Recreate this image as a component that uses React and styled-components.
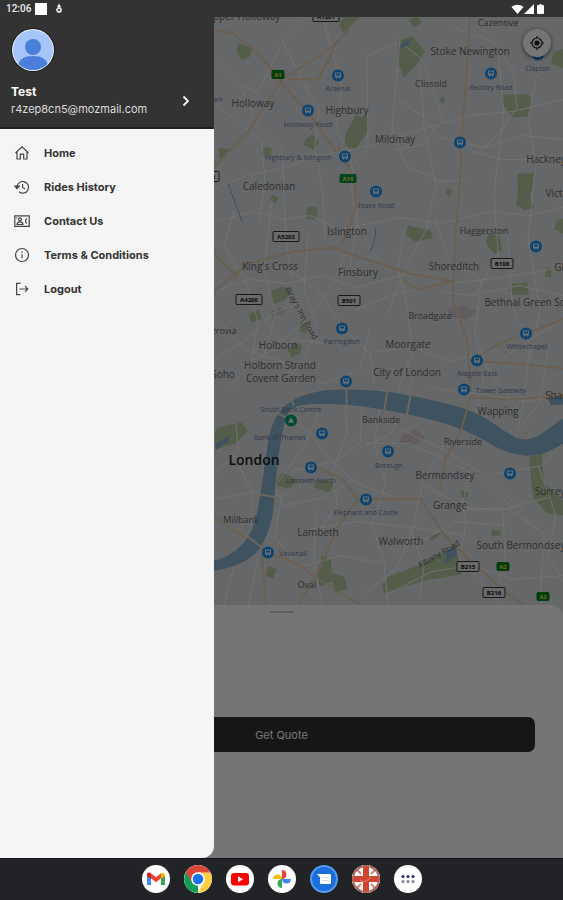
import React, { useState } from "react";
import styled, { createGlobalStyle } from "styled-components";

const GlobalStyle = createGlobalStyle`
  * {
    box-sizing: border-box;
  }

  body {
    margin: 0;
    background: #222327;
    font-family: Inter, "Liberation Sans", sans-serif;
  }
`;

const Screen = styled.div`
  display: flex;
  flex-direction: column;
  min-height: 100vh;
`;

const StatusBar = styled.header`
  display: flex;
  align-items: center;
  gap: 4px;
  height: 17px;
  padding: 0 18px 0 6px;
  background: #333;
  color: #eee;
  font-family: Roboto, sans-serif;
  font-size: 10px;
  font-weight: 500;
`;

const StatusSquare = styled.span`
  width: 12px;
  height: 12px;
  background: #fff;
`;

const StatusSpacer = styled.span`
  flex: 1;
`;

const Main = styled.main`
  position: relative;
  display: flex;
  flex: 1;
  flex-direction: column;
`;

const MapArea = styled.section`
  position: relative;
  flex: 1;
  min-height: 300px;
  background: #dfe1e3;
`;

const MapSvg = styled.svg`
  position: absolute;
  inset: 0;
  width: 100%;
  height: 100%;
  font-family: "Open Sans", sans-serif;
`;

const LocateButton = styled.button`
  position: absolute;
  top: 12px;
  right: 12px;
  display: flex;
  align-items: center;
  justify-content: center;
  width: 28px;
  height: 28px;
  padding: 0;
  border: 0;
  border-radius: 50%;
  background: #fff;
  box-shadow: 0 1px 4px rgba(0, 0, 0, 0.6);
  color: #222;
`;

const Sheet = styled.section`
  position: relative;
  display: flex;
  flex-direction: column;
  align-items: center;
  gap: 104px;
  margin-top: -12px;
  padding: 6px 28px 106px;
  border-radius: 12px 12px 0 0;
  background: #fff;
`;

const Handle = styled.div`
  width: 24px;
  height: 2px;
  border-radius: 1px;
  background: #ccc;
`;

const QuoteButton = styled.button`
  width: 100%;
  height: 35px;
  border: 0;
  border-radius: 7px;
  background: #303030;
  color: #fff;
  font: 400 11px Inter, sans-serif;
`;

const Scrim = styled.div`
  position: absolute;
  inset: 0;
  background: rgba(0, 0, 0, 0.54);
`;

const Drawer = styled.aside`
  position: absolute;
  top: 0;
  bottom: 0;
  left: 0;
  display: flex;
  flex-direction: column;
  width: 38%;
  min-width: 200px;
  overflow: hidden;
  border-radius: 0 0 12px 0;
  background: #f5f5f5;
`;

const Profile = styled.div`
  display: flex;
  flex-direction: column;
  gap: 12px;
  height: 112px;
  padding: 11px 20px 0 11px;
  border-bottom: 2px solid #222;
  background: #333;
`;

const Avatar = styled.svg`
  width: 44px;
  height: 44px;
`;

const ProfileLink = styled.a`
  display: flex;
  align-items: center;
  justify-content: space-between;
  color: #fff;
  text-decoration: none;
`;

const ProfileName = styled.div`
  font-size: 12px;
  font-weight: 700;
  line-height: 16px;
`;

const ProfileEmail = styled.div`
  color: #ddd;
  font-size: 11px;
  line-height: 18px;
`;

const Menu = styled.nav`
  display: flex;
  flex-direction: column;
  padding: 7px 0;
`;

const MenuItem = styled.a`
  display: flex;
  align-items: center;
  gap: 14px;
  height: 34px;
  padding-left: 14px;
  color: #333;
  font-size: 11px;
  font-weight: 700;
  text-decoration: none;

  svg {
    width: 16px;
    height: 16px;
    fill: none;
    stroke: #444;
    stroke-width: 1.2;
  }
`;

const Dock = styled.footer`
  display: flex;
  align-items: center;
  justify-content: center;
  gap: 14px;
  height: 42px;
  background: #222327;
  box-shadow: inset 0 1px 0 #101114;
`;

const DockButton = styled.button`
  width: 28px;
  height: 28px;
  padding: 0;
  overflow: hidden;
  border: 0;
  border-radius: 50%;
  background: ${(props) => props.$bg || "#fff"};

  svg {
    display: block;
    width: 28px;
    height: 28px;
  }
`;

const parks = [
  "M398 42l14-6 13 16-9 14-12 12-6-14z",
  "M238 44l14 4-2 9-8 4-5-8z",
  "M344 17h16l-8 10-9 6-4-7z",
  "M502 95h27l3 8-4 14-16 1-9-13z",
  "M517 174h17l-2 16-6 19-10-3 2-17z",
  "M356 116l12 3-1 14-11 16-12-2 2-14z",
  "M305 140l8-5 6 8-6 7-9-4z",
  "M265 147l7 2-3 8-8-2z",
  "M219 148l10 2-3 9-7-1z",
  "M443 97l3 4-4 3-3-4z",
  "M408 226l23 5 2 8-18 3-9-7z",
  "M488 234l12 3 2 14-8 3-8-10z",
  "M512 284l15-1 2 12-15 1-5-5z",
  "M546 267l6 2-1 9-6-1z",
  "M307 207l11 1-2 12-10-1z",
  "M271 292l12-5 9 4-6 9-13 5z",
  "M249 314l10-3 3 8-11 4z",
  "M300 322l7 2-1 10-6-2z",
  "M288 350l7-7 7 3-2 9-9 3z",
  "M217 428l24-5 7 8-12 13-21 6v-17z",
  "M281 473l10 4 9 6-11 6-14-3z",
  "M316 480l18 2-4 11-16-5z",
  "M529 457l13-2 2 28 19 18v15l-16-2-14-16z",
  "M388 577l33-12 34-19 7 29-37 6-41 13-2-8z",
  "M322 556l9 4 1 22-12 5-4-11z",
  "M331 573l14 5 2 11-12 4z",
  "M268 566l9 4-4 9-7-3z",
  "M460 491l9 2-3 7-7-3z",
  "M408 20l10-3 4 6-8 5z",
  "M553 53l10-4v20l-12-5z",
  "M516 200l14-2 4 11-11 2z",
  "M556 222l7-3v15l-8-4z",
  "M492 530l9 1-1 6-9-1z",
  "M430 536l11-3-5 6-6 2z",
  "M448 188l5 4-4 5-3-4z",
  "M272 195l6 3-2 6-6-2z",
];

const minorRoads = [
  "M214 60l26 25 18 8 24-50 26-26",
  "M214 105l22 16 26 22 3 40-6 40",
  "M214 190l32-14 40-8 32-12 36-6 44-12 30-10 40-12 45-4 50-12",
  "M240 86l20 44 22 20 4 90 6 40",
  "M283 42l22 44 14 24-4 36 8 50 2 44",
  "M322 17l12 40 8 30-6 44 14 22 8 66-8 48",
  "M367 56l34-13 22 18 20 60-20 24-30 6",
  "M367 56l1 92-18 22 6 54 22 36",
  "M400 40l-8 90 14 36 34 16 28-2",
  "M420 70l4 56 12 60-10 44-22 40-16 44",
  "M455 28l38 14 20 28 4 38-16 24-22 20",
  "M398 100l24 16 18 22 44 10 40-12 39 4",
  "M472 152l30 8 61 0",
  "M540 58l-12 62 8 44-8 76 12 70-10 50",
  "M498 52l6 60-10 82 4 60-24 44",
  "M214 222l40-10 30 8 26-4 30 14 60-12 40 6 50-12 40 4 33-8",
  "M272 200l-8 70 12 44-14 48",
  "M234 212l-10 34 22 36 12 40-8 46",
  "M214 292l34-12 40 4 34-8 34 12 60-16",
  "M288 270l30 20 26 40 26 24 4 30",
  "M308 236l-4 54 14 38-18 40",
  "M350 250l-22 40-14 24-30 26-32 12",
  "M404 230l-6 40 10 40 4 44-14 36",
  "M356 310l40-16 50-10 40-4 77-12",
  "M370 330l-10 40-36 14-36-12",
  "M374 352l40-4 34 14 50-12",
  "M214 320l30 30 44 14 20 20",
  "M214 360l36-22 22-24 26-10",
  "M230 388l24-28 40-20 30 4",
  "M435 220l14 40 32 20-6 54 12 34 32 44",
  "M443 292l26 4 50-10 44 10",
  "M508 240l4 66 18 40-6 54-10 50",
  "M563 320l-36 22-42 30-8 40",
  "M430 388l60 8 40 6 33-8",
  "M548 350l-8 54-24 26",
  "M345 404l2 30-14 36 4 36-24 34",
  "M286 420l24 12 14 22 30 28 46 18",
  "M320 410l-18 40-28 38 10 18 40-8 30-18",
  "M362 410l-2 34-26 18-44 10",
  "M382 398l-8 46 12 40-14 40 12 40 4 40",
  "M413 376l-6 30-16 28-24 12",
  "M364 444l46 0 30 14 40 20 60 54",
  "M402 430l48 24 32 20 44 40",
  "M443 446l-20 36-10 46-16 40-34 28",
  "M424 486l46 24 34 0 44-12",
  "M460 492l6 30-6 40 24 24 20 20",
  "M470 470l-8 38 46 2 36 24-4 70",
  "M498 474l44-8 20-22",
  "M538 466l18 50-8 40 15 26",
  "M214 475l24-22-2-30",
  "M214 500l40-8 30 5 16-18",
  "M232 452l20 40 0 48-18 26-10 40",
  "M258 560l-10 48",
  "M281 498l-6 40 24 30 42-12 40 8",
  "M316 510l-2 50 8 46",
  "M310 530l46-8 60 6 50 8",
  "M391 546l34-6 30-18 50 4",
  "M388 594l44-22 40-6 40 14 51-4",
  "M418 606l6-38-14-40",
  "M503 510l2 50-12 46",
];

const mainRoads = [
  "M214 30l20 4 26 22 26 32 26 30 24 34",
  "M214 168l34-36 34-52 50-32 28-31",
  "M288 80l30 0 16-30",
  "M470 17l-3 50-4 54-3 60-5 60-2 60 14 40 4 50",
  "M214 292l34-28 46-12 40-4 32 12 44 14 42 8",
  "M340 248l16-40-2-30-16-30",
  "M453 282l-36 8-14-10",
  "M470 362l30-18 63-24",
  "M480 362l36 2 47 5",
  "M470 400l-10 34-14 24-6 32",
  "M470 398l46 2 47-4",
  "M214 518l22 14 30 20 30 12 26 18 40 24",
  "M262 555l4 50",
  "M298 606l20-34 20-44 20-28 62-1 24 36 24 24 38 34 40 28",
  "M358 499l-16-20-32-14",
  "M214 254l24 24",
];

const bridges = [
  "M286 388l8 18",
  "M346 382l1 28",
  "M388 386l-4 26",
  "M412 388l-6 32",
  "M260 495l18 3",
  "M236 528l26 20",
  "M276 413l12 6",
];

const stations = [
  [338, 76, "Arsenal", 338, 91],
  [308, 111, "Holloway Road", 308, 127],
  [345, 157, "Highbury & Islington", 298, 160],
  [376, 192, "Essex Road", 376, 208],
  [491, 74, "Rectory Road", 491, 90],
  [538, 55, "Clapton", 538, 71],
  [460, 143],
  [536, 247],
  [342, 329, "Farringdon", 342, 344],
  [346, 382],
  [526, 334, "Whitechapel", 527, 349],
  [477, 361, "Aldgate East", 477, 376],
  [464, 390, "Tower Gateway", 501, 393],
  [322, 434],
  [388, 452, "Borough", 389, 468],
  [311, 468, "Lambeth North", 311, 483],
  [366, 500, "Elephant and Castle", 366, 515],
  [510, 474],
  [268, 553, "Vauxhall", 293, 556],
];

const places = [
  ["Upper Holloway", 243, 20],
  ["Cazenove", 498, 26, 9],
  ["Stoke Newington", 470, 55],
  ["Clissold", 431, 87, 9],
  ["Holloway", 253, 107],
  ["Highbury", 347, 114],
  ["Mildmay", 395, 143],
  ["Hackney", 546, 163],
  ["Caledonian", 269, 190],
  ["Victoria", 563, 197],
  ["Haggerston", 484, 234, 9],
  ["Islington", 347, 235],
  ["King's Cross", 270, 270],
  ["Finsbury", 358, 276],
  ["Shoreditch", 454, 270],
  ["Globe Town", 582, 271],
  ["Bethnal Green South", 533, 306],
  ["Broadgate", 430, 319, 9],
  ["Fitzrovia", 219, 334, 9],
  ["Holborn", 278, 349],
  ["Moorgate", 408, 348],
  ["Holborn Strand", 280, 369],
  ["Covent Garden", 281, 382],
  ["Soho", 223, 378],
  ["City of London", 407, 376],
  ["Shadwell", 566, 399],
  ["Wapping", 498, 415],
  ["Bankside", 381, 423, 9],
  ["Riverside", 463, 445, 9],
  ["Bermondsey", 445, 479],
  ["Surrey Quays", 566, 495],
  ["Grange", 450, 509],
  ["Millbank", 241, 523, 9],
  ["Lambeth", 318, 536],
  ["Walworth", 401, 545],
  ["South Bermondsey", 521, 549],
  ["Oval", 307, 588, 9],
];

const shields = [
  ["A1201", 326, 17],
  ["A5203", 286, 237],
  ["A4200", 249, 300],
  ["B501", 349, 301],
  ["B108", 502, 264],
  ["B215", 468, 567],
  ["B216", 494, 593],
  ["A400", 208, 177],
  ["A1", 278, 75, "#00851c"],
  ["A10", 348, 179, "#009548"],
  ["A2", 503, 567, "#00851c"],
  ["A2", 543, 597, "#00851c"],
];

const LondonMap = () => (
  <MapSvg viewBox="0 17 563 601" preserveAspectRatio="xMidYMid slice" role="img" aria-label="Map of London">
    <rect y="17" width="563" height="601" fill="#dfe1e3" />
    {parks.map((d) => (
      <path key={d} d={d} fill="#b8cba2" />
    ))}
    <g fill="#d4cacc">
      <path d="M402 436l14-6 10 8-12 8-14-2z" />
      <path d="M447 310l16-4 14 6-10 8-16-2z" />
      <path d="M270 312l12-4 4 4-14 6z" />
    </g>
    <g fill="none" stroke="#f6f6f2" strokeWidth="1" strokeLinejoin="round">
      {minorRoads.map((d) => (
        <path key={d} d={d} />
      ))}
    </g>
    <g fill="none" stroke="#e6cfae" strokeWidth="2" strokeLinejoin="round">
      {mainRoads.map((d) => (
        <path key={d} d={d} />
      ))}
    </g>
    <path
      d="M200 563c22-1 34-9 44-20 12-14 14-34 18-58 5-30 5-54 16-70 9-14 28-25 66-25 30 0 50 3 66 6 30 6 54 11 74 22 16 9 26 20 40 22 20 0 28-20 53-27v25c-20 7-30 20-52 18-26-2-38-16-56-23-20-9-44-15-66-19-20-4-40-8-62-9-30-1-48-1-53 8-7 18-9 40-12 66-3 28-1 42-14 66-10 17-30 25-62 28z"
      fill="#89b2d0"
    />
    <path
      d="M548 399l8-2 7 1v7l-12 1zM446 553l10-7 1 10-12 8zM402 43l8-3-2 6-8 3zM216 444l14-8-2 6-12 8z"
      fill="#89b2d0"
    />
    <path d="M371 252c2-10 6-14 4-24M242 222l-8-22-6-16" fill="none" stroke="#89b2d0" strokeWidth="1" />
    <g fill="none" stroke="#e8e0cc" strokeWidth="2">
      {bridges.map((d) => (
        <path key={d} d={d} />
      ))}
      <path d="M470 400l-10 34" stroke="#e6cfae" />
    </g>

    <g textAnchor="middle" fill="#666" fontSize="10">
      {places.map(([name, x, y, size]) => (
        <text key={name} x={x} y={y} fontSize={size || 10}>
          {name}
        </text>
      ))}
      <text x="254" y="465" fill="#222" fontSize="14" fontWeight="600">
        London
      </text>
      <text fontSize="8" transform="translate(299 315) rotate(61)">
        Gray's Inn Road
      </text>
      <text fontSize="8" transform="translate(440 557) rotate(-30)">
        Albany Road
      </text>
    </g>

    <g textAnchor="middle" fill="#6c7ba8" fontSize="7">
      {stations.map(([x, y, name, tx, ty]) => (
        <g key={`${x}-${y}`}>
          <circle cx={x} cy={y} r="6" fill="#1b93f2" />
          <path
            d={`M${x - 3} ${y - 3}h6v5h-1v1h-1v-1h-2v1h-1v-1h-1z`}
            fill="#e3f1ff"
          />
          <path d={`M${x - 2} ${y - 2}h4v2h-4z`} fill="#1b93f2" />
          {name && (
            <text x={tx} y={ty}>
              {name}
            </text>
          )}
        </g>
      ))}
      <text x="291" y="412">South Bank Centre</text>
      <text x="216" y="102">Park</text>
      <text x="280" y="440">Bank of Thames</text>
      <circle cx="291" cy="421" r="6" fill="#00a36c" />
      <path d="M288 423l3-5 3 5z" fill="#fff" />
    </g>

    <g textAnchor="middle" fontSize="6" fontWeight="700">
      {shields.map(([name, x, y, color]) => {
        const w = color ? (name.length > 2 ? 16 : 12) : name.length > 4 ? 26 : 22;
        const h = color ? 8 : 10;
        return (
          <g key={`${name}-${x}`}>
            <rect
              x={x - w / 2}
              y={y - h / 2}
              width={w}
              height={h}
              rx="1"
              fill={color || "#e8e8e8"}
              stroke={color || "#333"}
            />
            <text x={x} y={y + 2} fill={color ? "#ffe14d" : "#111"}>
              {name}
            </text>
          </g>
        );
      })}
    </g>
  </MapSvg>
);

const HomeIcon = () => (
  <svg viewBox="0 0 16 16">
    <path d="M1.5 8L8 1.8 14.5 8M3 6.8V14h3.3V9.2h3.4V14H13V6.8" />
  </svg>
);

const HistoryIcon = () => (
  <svg viewBox="0 0 16 16">
    <path d="M3 8.5A5.8 5.8 0 1 1 5 12.7" />
    <path d="M.8 7l2.2 2.6L5.3 7z" fill="#333" />
    <path d="M8.6 5v3.4l2.6 1.5" />
  </svg>
);

const ContactIcon = () => (
  <svg viewBox="0 0 16 16">
    <path d="M.8 2.8h14.4v10.6H.8z" />
    <circle cx="6" cy="6.3" r="1.5" />
    <path d="M3 11.5c.2-1.9 1.3-2.7 3-2.7s2.8.8 3 2.7zM12.8 5.5c-1.6 1-1.6 4 0 5M2.8 4.5v1" />
  </svg>
);

const InfoIcon = () => (
  <svg viewBox="0 0 16 16">
    <circle cx="8" cy="8" r="6.5" />
    <path d="M8 7.2v4M8 4.6v1.3" />
  </svg>
);

const LogoutIcon = () => (
  <svg viewBox="0 0 16 16">
    <path d="M6.5 2.3H2.6v11.4h3.9M5.5 8h8M11 5.2L13.8 8 11 10.8" />
  </svg>
);

const menuItems = [
  { label: "Home", Icon: HomeIcon },
  { label: "Rides History", Icon: HistoryIcon },
  { label: "Contact Us", Icon: ContactIcon },
  { label: "Terms & Conditions", Icon: InfoIcon },
  { label: "Logout", Icon: LogoutIcon },
];

const dockApps = [
  {
    name: "Gmail",
    icon: (
      <svg viewBox="0 0 28 28">
        <path d="M5 10v10h4v-8z" fill="#4285f4" />
        <path d="M23 10v10h-4v-8z" fill="#34a853" />
        <path d="M5 9.5C5 7.5 7.3 7 8.5 8L14 12.2 19.5 8v5L14 17.2 9 13.3l-4-3z" fill="#ea4335" />
        <path d="M19 8.4C21 6.8 23 8 23 10v1l-4 3z" fill="#fbbc04" />
        <path d="M5 9.5C5 7.8 7.3 7 9 8.4V14l-4-3z" fill="#c5221f" />
      </svg>
    ),
  },
  {
    name: "Chrome",
    icon: (
      <svg viewBox="0 0 28 28">
        <path d="M14 14v14A14 14 0 0 1 1.9 7z" fill="#0f9d58" />
        <path d="M14 7.5h12.4A14 14 0 0 1 14 28l5.8-10.5z" fill="#ffcd40" />
        <path d="M14 7.5h12.4A14 14 0 0 0 1.900 7l6 10.5z" fill="#db4437" />
        <circle cx="14" cy="14" r="6.8" fill="#fff" />
        <circle cx="14" cy="14" r="5.3" fill="#1a73e8" />
      </svg>
    ),
  },
  {
    name: "YouTube",
    icon: (
      <svg viewBox="0 0 28 28">
        <rect x="5" y="8" width="18" height="12.5" rx="3" fill="#f00" />
        <path d="M12 11.3v5.9l5-2.9z" fill="#fff" />
      </svg>
    ),
  },
  {
    name: "Photos",
    icon: (
      <svg viewBox="0 0 28 28">
        <path d="M14 5a4.5 4.5 0 0 1 0 9z" fill="#ea4335" />
        <path d="M23 14a4.5 4.5 0 0 1-9 0z" fill="#4285f4" />
        <path d="M14 23a4.5 4.5 0 0 1 0-9z" fill="#34a853" />
        <path d="M5 14a4.5 4.5 0 0 1 9 0z" fill="#fbbc04" />
      </svg>
    ),
  },
  {
    name: "Messages",
    bg: "#1a6fdc",
    icon: (
      <svg viewBox="0 0 28 28">
        <circle cx="14" cy="14" r="13" fill="none" stroke="#5a9ae6" strokeWidth="2" />
        <path d="M7 9h12.5c1 0 1.5.5 1.5 1.5v7c0 1-.5 1.5-1.5 1.5h-8c-1 0-1.5-.5-1.5-1.5v-5z" fill="#fff" />
        <path d="M12.5 12.5h6M12.5 15.5h6" stroke="#c9dcf7" />
      </svg>
    ),
  },
  {
    name: "London Cabs",
    icon: (
      <svg viewBox="0 0 28 28">
        <path d="M0 0h9l-2 7zM28 0h-9l2 7zM0 28h9l-2-7zM28 28h-9l2-7z" fill="#46546f" />
        <path d="M4 4l20 20M24 4L4 24" stroke="#fff" strokeWidth="5" />
        <path d="M4 4l20 20M24 4L4 24" stroke="#d98173" strokeWidth="2" />
        <path d="M14 0v28M0 14h28" stroke="#fff" strokeWidth="9" />
        <path d="M14 0v28M0 14h28" stroke="#cf452e" strokeWidth="6" />
        <path d="M8 15c3 3 9 1 11-4" fill="none" stroke="#e8897a" />
        <circle cx="14" cy="14" r="13" fill="none" stroke="#b4655a" strokeWidth="2" />
      </svg>
    ),
  },
  {
    name: "All apps",
    icon: (
      <svg viewBox="0 0 28 28">
        {[9, 14, 19].map((x) => (
          <React.Fragment key={x}>
            <circle cx={x} cy="11.5" r="1.5" fill="#26286f" />
            <circle cx={x} cy="16.5" r="1.5" fill="#7d7e9c" />
          </React.Fragment>
        ))}
      </svg>
    ),
  },
];

const App = () => {
  const [drawerOpen, setDrawerOpen] = useState(true);

  return (
    <Screen>
      <GlobalStyle />
      <StatusBar>
        <span>12:06</span>
        <StatusSquare />
        <svg width="16" height="12" viewBox="0 0 16 12">
          <path d="M8 .5l2 3.5H6z" fill="#eee" />
          <circle cx="8" cy="7" r="2" fill="none" stroke="#ddd" strokeWidth="1.8" />
        </svg>
        <StatusSpacer />
        <svg width="34" height="12" viewBox="0 0 34 12" fill="#fff">
          <path d="M.5 4C4 1 9 1 12.5 4L6.5 11z" />
          <path d="M23 1v10H13z" />
          <path d="M27 2h1.5V1h2v1H32c.5 0 1 .5 1 1v7c0 .5-.5 1-1 1h-5c-.5 0-1-.5-1-1V3c0-.5.5-1 1-1z" />
        </svg>
      </StatusBar>

      <Main>
        <MapArea>
          <LondonMap />
          <LocateButton aria-label="My location">
            <svg width="16" height="16" viewBox="0 0 16 16" fill="none" stroke="currentColor" strokeWidth="1.2">
              <circle cx="8" cy="8" r="5" />
              <circle cx="8" cy="8" r="2.6" fill="currentColor" stroke="none" />
              <path d="M8 1v2M8 13v2M1 8h2M13 8h2" />
            </svg>
          </LocateButton>
        </MapArea>

        <Sheet>
          <Handle />
          <QuoteButton>Get Quote</QuoteButton>
        </Sheet>

        {drawerOpen && (
          <>
            <Scrim onClick={() => setDrawerOpen(false)} />
            <Drawer>
              <Profile>
                <Avatar viewBox="0 0 44 44">
                  <defs>
                    <clipPath id="avatar">
                      <circle cx="22" cy="22" r="20" />
                    </clipPath>
                  </defs>
                  <circle cx="22" cy="22" r="22" fill="#191919" />
                  <circle cx="22" cy="22" r="21" fill="#f2f6ff" />
                  <g clipPath="url(#avatar)">
                    <rect width="44" height="44" fill="#a6c5fa" />
                    <circle cx="22" cy="19" r="8" fill="#4a80db" />
                    <path d="M7 40c0-9 6-12 15-12s15 3 15 12v4H7z" fill="#4a80db" />
                  </g>
                </Avatar>
                <ProfileLink href="#profile">
                  <div>
                    <ProfileName>Test</ProfileName>
                    <ProfileEmail>r4zep8cn5@mozmail.com</ProfileEmail>
                  </div>
                  <svg width="16" height="16" viewBox="0 0 16 16" fill="none" stroke="#fff" strokeWidth="1.8">
                    <path d="M5.5 3.5L10 8l-4.5 4.5" />
                  </svg>
                </ProfileLink>
              </Profile>
              <Menu>
                {menuItems.map(({ label, Icon }) => (
                  <MenuItem key={label} href="#menu">
                    <Icon />
                    {label}
                  </MenuItem>
                ))}
              </Menu>
            </Drawer>
          </>
        )}
      </Main>

      <Dock>
        {dockApps.map(({ name, bg, icon }) => (
          <DockButton key={name} $bg={bg} aria-label={name}>
            {icon}
          </DockButton>
        ))}
      </Dock>
    </Screen>
  );
};

export default App;
